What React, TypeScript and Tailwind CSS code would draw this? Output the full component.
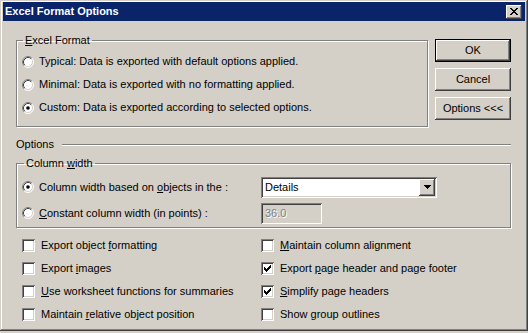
import React from 'react';

const raised =
  'shadow-[inset_-1px_-1px_0_#404040,inset_1px_1px_0_#ffffff,inset_-2px_-2px_0_#808080]';
const sunken =
  'shadow-[inset_1px_1px_0_#808080,inset_-1px_-1px_0_#ffffff,inset_2px_2px_0_#404040,inset_-2px_-2px_0_#d4d0c8]';

function Radio({ checked = false }: { checked?: boolean }) {
  return (
    <svg width="12" height="12" viewBox="0 0 12 12" className="shrink-0">
      <circle cx="6" cy="6" r="5" fill="#fff" />
      <path d="M9.89 2.11 A5.5 5.5 0 0 0 2.11 9.89" stroke="#808080" fill="none" />
      <path d="M9.89 2.11 A5.5 5.5 0 0 1 2.11 9.89" stroke="#ffffff" fill="none" />
      <path d="M9.18 2.82 A4.5 4.5 0 0 0 2.82 9.18" stroke="#404040" fill="none" />
      <path d="M9.18 2.82 A4.5 4.5 0 0 1 2.82 9.18" stroke="#d4d0c8" fill="none" />
      {checked && <circle cx="6" cy="6" r="1.8" fill="#000" />}
    </svg>
  );
}

function Check({ checked = false }: { checked?: boolean }) {
  return (
    <span className={`flex w-[13px] h-[13px] shrink-0 bg-white ${sunken}`}>
      {checked && (
        <svg width="13" height="13" viewBox="0 0 13 13" shapeRendering="crispEdges">
          <path d="M3 5h1v1h1v1h1V6h1V5h1V4h1V3h1v3H9v1H8v1H7v1H6v1H5V9H4V8H3z" fill="#000" />
        </svg>
      )}
    </span>
  );
}

function Button({ children, primary = false }: { children: React.ReactNode; primary?: boolean }) {
  const frame = primary
    ? 'shadow-[inset_0_0_0_1px_#000000,inset_-2px_-2px_0_#404040,inset_2px_2px_0_#ffffff,inset_-3px_-3px_0_#808080]'
    : raised;
  return (
    <button className={`w-[76px] h-[23px] bg-[#d4d0c8] text-[11px] text-black ${frame}`}>
      {children}
    </button>
  );
}

function CheckRow({ checked, children }: { checked?: boolean; children: React.ReactNode }) {
  return (
    <div className="flex items-center gap-[6px] h-[23px]">
      <Check checked={checked} />
      <span>{children}</span>
    </div>
  );
}

export default function App() {
  return (
    <div className="w-[528px] h-[333px] bg-[#d4d0c8] font-['Liberation_Sans',Arial,sans-serif] text-[11px] text-black leading-[13px]">
      <div className="h-[331px] px-[3px] pt-[2px] pb-[3px] shadow-[inset_-1px_-1px_0_#404040,inset_1px_1px_0_#d4d0c8,inset_-2px_-2px_0_#808080,inset_2px_2px_0_#ffffff]">
        {/* title bar */}
        <div className="h-[19px] bg-[#0a246a] flex items-center pl-[2px] pr-[3px]">
          <span className="text-white font-bold text-[11px]">Excel Format Options</span>
          <button className={`ml-auto w-[16px] h-[14px] bg-[#d4d0c8] flex items-center justify-center ${raised}`}>
            <svg width="8" height="7" viewBox="0 0 8 7" shapeRendering="crispEdges">
              <path d="M0 0h2v1h1v1h2V1h1V0h2v1H7v1H6v1H5v1h1v1h1v1h1v1H6V6H5V5H3v1H2v1H0V6h1V5h1V4h1V3H2V2H1V1H0z" fill="#000" />
            </svg>
          </button>
        </div>

        <div className="px-[13px] pt-[13px]">
          {/* top row: Excel Format + buttons */}
          <div className="flex items-start">
            <fieldset className="w-[412px] border border-[#808080] shadow-[1px_1px_0_#ffffff,inset_1px_1px_0_#ffffff] pl-[5px] pt-[3px] pb-[7px]">
              <legend className="ml-[1px] px-[2px] leading-[13px]">
                <u>E</u>xcel Format
              </legend>
              <div className="flex items-center gap-[5px] h-[23px]">
                <Radio />
                <span>Typical: Data is exported with default options applied.</span>
              </div>
              <div className="flex items-center gap-[5px] h-[23px]">
                <Radio />
                <span>Minimal: Data is exported with no formatting applied.</span>
              </div>
              <div className="flex items-center gap-[5px] h-[23px]">
                <Radio checked />
                <span>Custom: Data is exported according to selected options.</span>
              </div>
            </fieldset>
            <div className="ml-[7px] mt-[5px] flex flex-col gap-[6px]">
              <Button primary>OK</Button>
              <Button>Cancel</Button>
              <Button>Options &lt;&lt;&lt;</Button>
            </div>
          </div>

          {/* Options separator */}
          <div className="mt-[11px] h-[13px] flex items-center">
            <span>Options</span>
            <div className="flex-1 ml-[8px] mr-[1px] h-[2px] border-t border-t-[#808080] border-b border-b-white" />
          </div>

          {/* Column width */}
          <fieldset className="mt-[6px] w-[495px] border border-[#808080] shadow-[1px_1px_0_#ffffff,inset_1px_1px_0_#ffffff] pl-[5px] pt-[5px] pb-[2px]">
            <legend className="ml-[2px] px-[2px] leading-[13px]">
              Column <u>w</u>idth
            </legend>
            <div className="flex items-center h-[24px]">
              <div className="w-[239px] flex items-center gap-[5px]">
                <Radio checked />
                <span>
                  Column width based on <u>o</u>bjects in the :
                </span>
              </div>
              <div className={`w-[176px] h-[21px] bg-white flex items-center p-[2px] ${sunken}`}>
                <span className="flex-1 pl-[2px]">Details</span>
                <span className={`w-[16px] h-[17px] bg-[#d4d0c8] flex items-center justify-center ${raised}`}>
                  <svg width="7" height="4" viewBox="0 0 7 4" shapeRendering="crispEdges">
                    <path d="M0 0h7v1H6v1H5v1H4v1H3V3H2V2H1V1H0z" fill="#000" />
                  </svg>
                </span>
              </div>
            </div>
            <div className="flex items-center h-[24px] mt-[2px]">
              <div className="w-[239px] flex items-center gap-[5px]">
                <Radio />
                <span>
                  <u>C</u>onstant column width (in points) :
                </span>
              </div>
              <div className={`w-[61px] h-[21px] bg-[#d4d0c8] flex items-center pl-[4px] ${sunken}`}>
                <span className="text-[#808080] [text-shadow:1px_1px_0_#ffffff]">36.0</span>
              </div>
            </div>
          </fieldset>

          {/* checkboxes */}
          <div className="mt-[6px] pl-[6px] grid grid-cols-[239px_1fr]">
            <CheckRow>
              Export object <u>f</u>ormatting
            </CheckRow>
            <CheckRow>
              <u>M</u>aintain column alignment
            </CheckRow>
            <CheckRow>
              Export <u>i</u>mages
            </CheckRow>
            <CheckRow checked>
              Export <u>p</u>age header and page footer
            </CheckRow>
            <CheckRow>
              <u>U</u>se worksheet functions for summaries
            </CheckRow>
            <CheckRow checked>
              <u>S</u>implify page headers
            </CheckRow>
            <CheckRow>
              Maintain <u>r</u>elative object position
            </CheckRow>
            <CheckRow>
              Show <u>g</u>roup outlines
            </CheckRow>
          </div>
        </div>
      </div>
    </div>
  );
}
